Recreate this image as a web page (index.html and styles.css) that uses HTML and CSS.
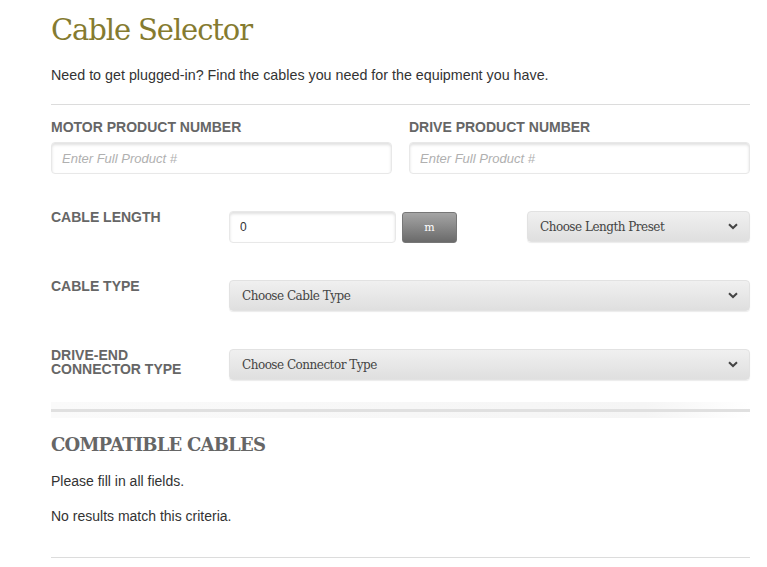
FILE: index.html
```html
<!DOCTYPE html>
<html>
<head>
<meta charset="utf-8">
<link rel="stylesheet" href="styles.css">
</head>
<body>
<div class="page">
  <h1 class="title">Cable Selector</h1>
  <p class="intro">Need to get plugged-in? Find the cables you need for the equipment you have.</p>
  <div class="rule"></div>

  <div class="products">
    <div class="field">
      <label class="label">MOTOR PRODUCT NUMBER</label>
      <input class="text-input" type="text" placeholder="Enter Full Product #">
    </div>
    <div class="field">
      <label class="label">DRIVE PRODUCT NUMBER</label>
      <input class="text-input" type="text" placeholder="Enter Full Product #">
    </div>
  </div>

  <div class="row row-length">
    <div class="label row-label">CABLE LENGTH</div>
    <div class="length-controls">
      <input class="text-input length-input" type="text" value="0">
      <button class="unit-btn">m</button>
    </div>
    <div class="select preset"><span>Choose Length Preset</span><svg class="chev" viewBox="0 0 10 7" width="10" height="7"><path d="M1 1.2 L5 5 L9 1.2" fill="none" stroke="#444" stroke-width="2"/></svg></div>
  </div>

  <div class="row row-type">
    <div class="label row-label">CABLE TYPE</div>
    <div class="select"><span>Choose Cable Type</span><svg class="chev" viewBox="0 0 10 7" width="10" height="7"><path d="M1 1.2 L5 5 L9 1.2" fill="none" stroke="#444" stroke-width="2"/></svg></div>
  </div>

  <div class="row row-connector">
    <div class="label row-label">DRIVE-END<br>CONNECTOR TYPE</div>
    <div class="select"><span>Choose Connector Type</span><svg class="chev" viewBox="0 0 10 7" width="10" height="7"><path d="M1 1.2 L5 5 L9 1.2" fill="none" stroke="#444" stroke-width="2"/></svg></div>
  </div>

  <div class="divider"><div class="divider-line"></div></div>

  <h2 class="subtitle">COMPATIBLE CABLES</h2>
  <p class="msg msg-first">Please fill in all fields.</p>
  <p class="msg">No results match this criteria.</p>
  <div class="rule rule-bottom"></div>
</div>
</body>
</html>
```

FILE: styles.css
```css
html, body {
  margin: 0;
  padding: 0;
  background: #fff;
}
body {
  font-family: "Liberation Sans", Arial, sans-serif;
  font-size: 14px;
  color: #333;
}
.page {
  width: 699px;
  margin-left: 51px;
  padding-top: 10px;
}
.title {
  font-family: "DejaVu Serif", serif;
  font-weight: normal;
  font-size: 29px;
  letter-spacing: -1.1px;
  color: #857b30;
  margin: 0;
  line-height: 40px;
}
.intro {
  margin: 15px 0 0 0;
  line-height: 20px;
  font-size: 14.3px;
}
.rule {
  height: 1px;
  background: #dcdcdc;
  margin-top: 19px;
}
.products {
  display: grid;
  grid-template-columns: 341px 341px;
  column-gap: 17px;
  margin-top: 15px;
}
.field {
  display: flex;
  flex-direction: column;
}
.label {
  font-weight: bold;
  font-size: 14px;
  color: #666;
  line-height: 14px;
}
.text-input {
  margin-top: 8px;
  height: 32px;
  box-sizing: border-box;
  border: 1px solid #e8e8e8;
  border-radius: 4px;
  box-shadow: inset 0 2px 3px rgba(0,0,0,0.12);
  padding: 0 10px;
  font-family: "Liberation Sans", Arial, sans-serif;
  font-size: 13px;
  color: #333;
  background: #fff;
  outline: none;
}
.text-input::placeholder {
  color: #b0b0b0;
  font-style: italic;
}
.row {
  display: grid;
  grid-template-columns: 178px 1fr;
  align-items: start;
}
.row-length {
  grid-template-columns: 178px 228px 1fr;
  margin-top: 37px;
}
.row-type {
  margin-top: 37px;
}
.row-connector {
  margin-top: 38px;
}
.row-label {
  margin-top: -1px;
}
.length-controls {
  display: flex;
  gap: 6px;
}
.length-input {
  margin-top: 0;
  width: 167px;
  height: 32px;
  font-size: 12px;
}
.unit-btn {
  width: 55px;
  height: 31px;
  border: 1px solid #777;
  border-radius: 3px;
  background: linear-gradient(#a5a5a5, #6a6a6a);
  color: #fff;
  font-family: "DejaVu Serif", serif;
  font-size: 11px;
  padding: 0;
  margin-top: 1px;
}
.select {
  height: 31px;
  box-sizing: border-box;
  border-radius: 4px;
  border: 1px solid #e2e2e2;
  background: linear-gradient(#f0f0f0, #dfdfdf);
  box-shadow: 0 1px 1px rgba(0,0,0,0.08);
  display: flex;
  align-items: center;
  justify-content: space-between;
  padding: 0 11px 0 12px;
  font-family: "DejaVu Serif", serif;
  font-size: 12px;
  letter-spacing: -0.5px;
  color: #444;
}
.preset {
  width: 223px;
  justify-self: end;
}
.chev {
  display: block;
}
.divider {
  margin-top: 22px;
  height: 16px;
  background: linear-gradient(to right, #fafafa, #f5f5f5 85%, #fff);
  display: flex;
  align-items: center;
}
.divider-line {
  height: 3px;
  width: 100%;
  background: #e0e0e0;
}
.subtitle {
  font-family: "DejaVu Serif", serif;
  font-weight: bold;
  font-size: 18px;
  letter-spacing: -0.8px;
  color: #666;
  margin: 14px 0 0 0;
  line-height: 26px;
}
.msg {
  margin: 0;
  line-height: 20px;
}
.msg-first {
  margin-top: 13px;
}
.msg + .msg {
  margin-top: 15px;
}
.rule-bottom {
  margin-top: 31px;
}
```
